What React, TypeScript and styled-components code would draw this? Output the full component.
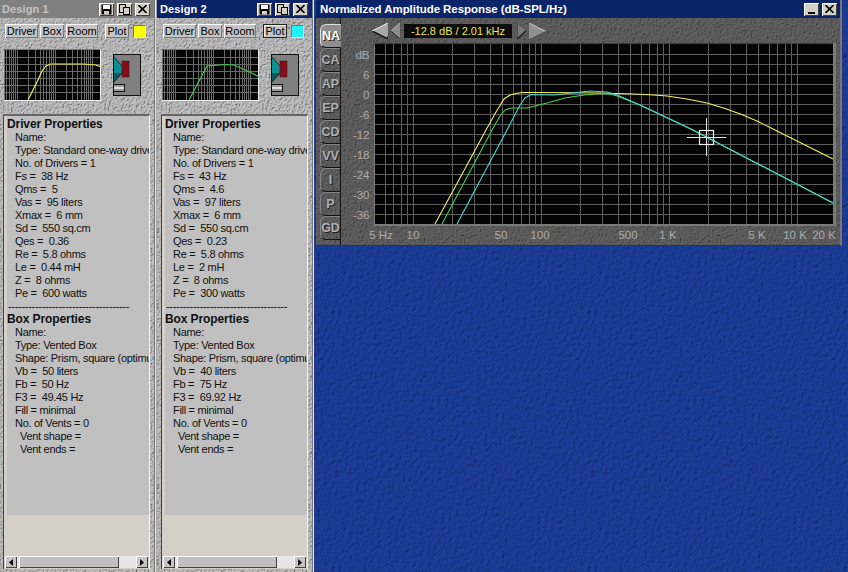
import React from "react";
import styled, { createGlobalStyle } from "styled-components";

const texture = (freq: number, color: string, scale: number, kd = 1.15) => {
  const svg = `<svg xmlns="http://www.w3.org/2000/svg" width="256" height="256"><filter id="n" x="0" y="0" width="100%" height="100%"><feTurbulence type="fractalNoise" baseFrequency="${freq}" numOctaves="3" seed="4" stitchTiles="stitch"/><feDiffuseLighting surfaceScale="${scale}" diffuseConstant="${kd}" lighting-color="${color}"><feDistantLight azimuth="225" elevation="60"/></feDiffuseLighting></filter><rect width="256" height="256" filter="url(#n)"/></svg>`;
  return `url("data:image/svg+xml,${encodeURIComponent(svg)}")`;
};

const GlobalStyle = createGlobalStyle`
  html, body {
    margin: 0;
    padding: 0;
    width: 848px;
    height: 572px;
    overflow: hidden;
    background: #1c3a8c;
  }
`;

const Desktop = styled.div`
  display: flex;
  align-items: flex-start;
  width: 849px;
  height: 572px;
  margin-left: -1px;
  overflow: hidden;
  background-color: #1c3a8c;
  background-image: ${texture(0.28, "#1b3a92", 1.5)};
  font-family: "Liberation Sans", Arial, sans-serif;
  font-size: 11px;
  color: #000;
`;

const DesignWindow = styled.div`
  flex: none;
  width: 155px;
  height: 572px;
  margin-right: 2px;
  border-right: 1px solid #777;
  box-shadow: 1px 0 0 #e4e4e4;
  background-color: #b8b8b8;
  background-image: ${texture(0.6, "#b8b8b8", 2.8)};

  &:first-child {
    box-shadow: 1px 0 0 #e4e4e4, 2px 0 0 #a8a8a8;
  }
`;

const TitleBar = styled.div<{ $active?: boolean }>`
  display: flex;
  align-items: center;
  height: 18px;
  padding: 0 4px 0 3px;
  background: ${(p) => (p.$active ? "#0a246a" : "#808080")};
  color: ${(p) => (p.$active ? "#fff" : "#c4c4c4")};
  font-weight: bold;
  font-size: 11px;
  letter-spacing: 0.1px;
  white-space: nowrap;
`;

const TitleText = styled.span`
  flex: 1;
`;

const CaptionButton = styled.button`
  display: flex;
  align-items: center;
  justify-content: center;
  width: 15px;
  height: 13px;
  padding: 0;
  margin-left: 3px;
  border: none;
  background: #d4d0c8;
  box-shadow: inset 1px 1px 0 #fff, inset -1px -1px 0 #404040;
`;

const Toolbar = styled.div`
  display: flex;
  align-items: center;
  gap: 2px;
  height: 14px;
  margin-top: 6px;
  padding-left: 6px;
`;

const PanelButton = styled.button<{ $width: number; $pressed?: boolean; $gapLeft?: number }>`
  width: ${(p) => p.$width}px;
  height: 14px;
  margin-left: ${(p) => p.$gapLeft ?? 0}px;
  padding: 0;
  border: none;
  background: #c4c4c4;
  box-shadow: ${(p) =>
    p.$pressed
      ? "inset 1px 1px 0 #222, inset -1px -1px 0 #222, inset 2px 2px 0 #eee"
      : "inset 1px 1px 0 #fff, inset -1px -1px 0 #777"};
  font: 11px "Liberation Sans", Arial, sans-serif;
  color: #000;
`;

const Swatch = styled.div<{ $color: string }>`
  width: 11px;
  height: 11px;
  margin-left: 2px;
  background: ${(p) => p.$color};
  border: 1px solid #eee;
  border-top-color: #777;
  border-left-color: #777;
`;

const PreviewRow = styled.div`
  display: flex;
  align-items: flex-start;
  margin-top: 11px;
  padding-left: 5px;
`;

const SpeakerSlot = styled.div`
  margin: 5px 0 0 12px;
`;

const PropertiesPanel = styled.div`
  display: flex;
  flex-direction: column;
  width: 145px;
  height: 453px;
  margin: 13px 0 0 4px;
  background: #d4d0c8;
  border-top: 2px solid #666;
  border-left: 1px solid #444;
  border-right: 1px solid #f4f4f4;
`;

const TextPane = styled.div`
  flex: none;
  height: 397px;
  margin-left: 3px;
  padding-top: 2px;
  overflow: hidden;
  background: #c0c0c0;
  color: #111;
  line-height: 13px;
  font-size: 11px;
  letter-spacing: -0.3px;
  white-space: nowrap;
`;

const Heading = styled.div`
  height: 13px;
  font-weight: bold;
  font-size: 12px;
  letter-spacing: -0.1px;
`;

const PropRow = styled.div<{ $indent: number }>`
  height: 13px;
  padding-left: ${(p) => p.$indent}px;
`;

const ScrollBar = styled.div`
  display: flex;
  align-items: stretch;
  height: 12px;
  margin: auto 1px 1px 1px;
  background: #e6e6e6;
`;

const ScrollArrow = styled.div`
  display: flex;
  flex: none;
  align-items: center;
  justify-content: center;
  width: 12px;
  background: #c4c4c4;
  box-shadow: inset 1px 1px 0 #fff, inset -1px -1px 0 #404040;
`;

const ScrollThumb = styled.div`
  flex: none;
  width: 100px;
  margin-left: 2px;
  background: #c0c0c0;
  box-shadow: inset 1px 1px 0 #fff, inset -1px -1px 0 #404040;
`;

const ScrollTrack = styled.div`
  flex: 1;
`;

const GraphWindow = styled.div`
  flex: none;
  width: 526px;
  height: 246px;
  margin-left: 1px;
  background-color: #5c5c5c;
  background-image: ${texture(0.55, "#5c5c5c", 2)};
  border-right: 2px solid #777;
  border-bottom: 1px solid #333;
  box-sizing: border-box;
`;

const GraphTitle = styled(TitleBar)`
  padding: 0 3px 0 4px;
  font-size: 11.5px;
  letter-spacing: -0.05px;
`;

const GraphBody = styled.div`
  display: flex;
  height: 227px;
`;

const TabStrip = styled.div`
  display: flex;
  flex: none;
  flex-direction: column;
  width: 25px;
  padding: 6px 0 0 4px;
  box-sizing: border-box;
  border-right: 1px solid #111;
`;

const Tab = styled.div<{ $active?: boolean }>`
  display: flex;
  align-items: center;
  justify-content: center;
  flex: none;
  box-sizing: border-box;
  width: ${(p) => (p.$active ? "21px" : "20px")};
  height: 24px;
  border: 1px solid ${(p) => (p.$active ? "#ddd" : "#858585")};
  border-right: none;
  border-bottom: 1px solid #111;
  border-radius: 6px 0 0 6px;
  background: ${(p) => (p.$active ? "#8e8e8e" : "transparent")};
  color: ${(p) => (p.$active ? "#fff" : "#b0b0b0")};
  font-size: 12.5px;
  font-weight: bold;
  text-shadow: 1px 1px 0 #222;
`;

const ChartArea = styled.div`
  display: flex;
  flex: 1;
  flex-direction: column;
  min-width: 0;
`;

const NavBar = styled.div`
  display: flex;
  align-items: center;
  gap: 3px;
  box-sizing: border-box;
  height: 24px;
  padding: 2px 0 0 31px;
`;

const Readout = styled.div`
  display: flex;
  align-items: center;
  justify-content: center;
  width: 108px;
  height: 14px;
  margin: 0 2px 0 1px;
  background: #0c0c0c;
  color: #e8e850;
  font-size: 11px;
  white-space: nowrap;
`;

const ChartSvg = styled.svg`
  display: block;
  width: 500px;
  height: 203px;
`;

const AxisLabel = styled.text`
  fill: #ababab;
  font-family: "Liberation Sans", Arial, sans-serif;
  font-size: 11.5px;
`;

const CloseGlyph = () => (
  <svg width="9" height="8" viewBox="0 0 9 8">
    <path d="M0.5 0 L8.5 8 M8.5 0 L0.5 8" stroke="#000" strokeWidth="1.6" />
  </svg>
);

const SaveGlyph = () => (
  <svg width="11" height="11" viewBox="0 0 11 11">
    <path d="M0.5 0.5 H10.5 V10.5 H0.5 Z" fill="#000" />
    <rect x="2" y="1" width="7" height="4" fill="#fff" />
    <rect x="3" y="7" width="5" height="3.5" fill="#d4d0c8" />
  </svg>
);

const CopyGlyph = () => (
  <svg width="11" height="11" viewBox="0 0 11 11">
    <rect x="0.5" y="0.5" width="6" height="8" fill="none" stroke="#000" />
    <rect x="4.5" y="3.5" width="6" height="7" fill="#d4d0c8" stroke="#000" />
  </svg>
);

const MinGlyph = () => (
  <svg width="9" height="9" viewBox="0 0 9 9">
    <rect x="1" y="7" width="7" height="2" fill="#000" />
  </svg>
);

const Triangle = ({ dir }: { dir: "left" | "right" }) => (
  <svg width="4" height="7" viewBox="0 0 4 7">
    <path d={dir === "left" ? "M4 0 L0 3.5 L4 7 Z" : "M0 0 L4 3.5 L0 7 Z"} fill="#000" />
  </svg>
);

const BigLeftArrow = () => (
  <svg width="16" height="16" viewBox="0 0 16 16">
    <path d="M16 0 L0 8 L16 16 Z" fill="#a8a8a8" />
    <path d="M0 8 L16 16 V13" stroke="#111" strokeWidth="1.5" fill="none" />
    <path d="M0 8 L16 0" stroke="#eee" strokeWidth="1" fill="none" />
  </svg>
);

const SmallLeftArrow = () => (
  <svg width="9" height="16" viewBox="0 0 9 16">
    <path d="M9 0 L0 8 L9 16 Z" fill="#8c8c8c" />
    <path d="M0 8 L9 16" stroke="#222" strokeWidth="1" />
    <path d="M0 8 L9 0" stroke="#bbb" strokeWidth="1" />
  </svg>
);

const SmallRightArrow = () => (
  <svg width="9" height="16" viewBox="0 0 9 16">
    <path d="M0 0 L9 8 L0 16 Z" fill="#777" />
    <path d="M0 16 L9 8" stroke="#111" strokeWidth="1.2" />
    <path d="M0 0 V16" stroke="#222" strokeWidth="1" />
  </svg>
);

const BigRightArrow = () => (
  <svg width="17" height="17" viewBox="0 0 17 17">
    <path d="M0 0 L17 8.5 L0 17 Z" fill="#909090" />
    <path d="M0 0 L17 8.5" stroke="#ccc" strokeWidth="1" />
    <path d="M0 17 L17 8.5" stroke="#444" strokeWidth="1" />
  </svg>
);

const Speaker = () => (
  <svg width="28" height="42" viewBox="0 0 28 42">
    <rect x="0.5" y="0.5" width="27" height="41" fill="#808080" stroke="#111" />
    <path d="M1 3 L9 12 V20 L1 28 Z" fill="#0e8f96" />
    <path d="M1 19 L9 19 L1 28 Z" fill="#0b5a60" />
    <path d="M1 3 L9 12 M1 28 L9 19" stroke="#111" strokeWidth="0.8" />
    <rect x="9" y="7" width="7" height="16" fill="#8a0c14" stroke="#222" strokeWidth="0.6" />
    <rect x="0.5" y="30.5" width="11" height="7" fill="#999" stroke="#111" />
    <rect x="1" y="33" width="10" height="2" fill="#ddd" />
  </svg>
);

const thumbGridX = (() => {
  const xs: number[] = [];
  [12, 49.5, 87].forEach((end) => {
    for (let n = 2; n <= 10; n++) xs.push(Math.round(end + 37.5 * (Math.log10(n) - 1)));
  });
  return xs;
})();

const Thumbnail = ({ points, color }: { points: string; color: string }) => (
  <svg width="97" height="52" viewBox="0 0 97 52" style={{ display: "block" }}>
    <rect width="97" height="52" fill="#eee" />
    <rect width="96" height="51" fill="#777" />
    <rect x="1" y="1" width="95" height="50" fill="#050505" />
    {thumbGridX.map((x, i) => (
      <line key={i} x1={x + 1.5} x2={x + 1.5} y1="1" y2="51" stroke="#6a6a6a" />
    ))}
    {[8, 15, 22, 29, 36, 43].map((y) => (
      <line key={y} x1="1" x2="96" y1={y + 0.5} y2={y + 0.5} stroke="#6a6a6a" />
    ))}
    <polyline points={points} fill="none" stroke={color} strokeWidth="1.2" />
  </svg>
);

const DECADE = 128;
const freqX = (f: number) => Math.round(413 + DECADE * Math.log10(f / 10)) + 0.5;

const gridFreqs = [
  6, 7, 8, 9, 10, 20, 30, 40, 50, 60, 70, 80, 90, 100, 200, 300, 400, 500, 600, 700, 800, 900,
  1000, 2000, 3000, 4000, 5000, 6000, 7000, 8000, 9000, 10000, 20000,
].filter((f) => freqX(f) < 833);

const dbLabels: [string, number][] = [
  ["dB", 55], ["6", 75], ["0", 95], ["-6", 115], ["-12", 135],
  ["-18", 155], ["-24", 175], ["-30", 195], ["-36", 215],
];

const freqLabels: [string, number][] = [
  ["5 Hz", 381], ["10", 413], ["50", 501], ["100", 540], ["500", 628],
  ["1 K", 668], ["5 K", 757], ["10 K", 795], ["20 K", 824],
];

const yellowCurve =
  "435,224 486,130 496,112 504,99 510,95 516,93.5 522,92.5 540,92.5 600,93 633,94 650,94.8 667,96 687,99 707,103 725,108.5 743,115 758,121.5 775,130 833,159";
const greenCurve =
  "442,224 492,130 500,116 505,110 511,108 527,108 547,103 565,98 584,95 600,93.5 610,94 617,96 640,105 693,130 833,203";
const cyanCurve =
  "457,224 507,130 520,105 525,98 531,94.5 554,95 572,93 590,91 607,92 617,95 640,105 693,130 833,203";

const ResponseChart = () => (
  <ChartSvg viewBox="341 42 500 203">
    <rect x="374" y="43" width="462" height="183" fill="#7a7a7a" />
    <rect x="374" y="43" width="459" height="1" fill="#3c3c3c" />
    <rect x="375" y="44" width="458" height="180" fill="#040404" />
    {gridFreqs.map((f) => (
      <line key={f} x1={freqX(f)} x2={freqX(f)} y1="44" y2="224" stroke="#5e5e5e" />
    ))}
    {Array.from({ length: 17 }, (_, i) => 54 + i * 10).map((y) => (
      <line key={y} x1="375" x2="833" y1={y + 0.5} y2={y + 0.5} stroke="#5e5e5e" />
    ))}
    <polyline points={yellowCurve} fill="none" stroke="#f2f25a" strokeWidth="1.1" />
    <polyline points={greenCurve} fill="none" stroke="#3fd04a" strokeWidth="1.1" />
    <polyline points={cyanCurve} fill="none" stroke="#46d8d8" strokeWidth="1.1" />
    <path d="M687 137.5 H726 M706.5 118 V156" stroke="#e8e8e8" strokeWidth="1" />
    <rect x="699.5" y="130.5" width="14" height="14" fill="none" stroke="#f2f2f2" strokeWidth="1.2" />
    {dbLabels.map(([t, y]) => (
      <AxisLabel key={t} x="369.5" y={y + 4} textAnchor="end">{t}</AxisLabel>
    ))}
    {freqLabels.map(([t, x]) => (
      <AxisLabel key={t} x={x} y="239" textAnchor="middle">{t}</AxisLabel>
    ))}
  </ChartSvg>
);

type Design = {
  title: string;
  active?: boolean;
  swatch: string;
  curve: string;
  curveColor: string;
  driver: string[];
  box: string[];
};

const designs: Design[] = [
  {
    title: "Design 1",
    swatch: "#ffff00",
    curve: "24,51 33,33 38,22 42,17 47,15 78,15 92,16 97,18",
    curveColor: "#eded50",
    driver: [
      "Name:", "Type: Standard one-way driver", "No. of Drivers = 1", "Fs =  38 Hz", "Qms =  5",
      "Vas =  95 liters", "Xmax =  6 mm", "Sd =  550 sq.cm", "Qes =  0.36", "Re =  5.8 ohms",
      "Le =  0.44 mH", "Z =  8 ohms", "Pe =  600 watts",
    ],
    box: [
      "Name:", "Type: Vented Box", "Shape: Prism, square (optimum)", "Vb =  50 liters", "Fb =  50 Hz",
      "F3 =  49.45 Hz", "Fill = minimal", "No. of Vents = 0",
    ],
  },
  {
    title: "Design 2",
    active: true,
    swatch: "#22f0f8",
    curve: "27,51 45,17 58,16 63,15.5 72,16 90,24 97,28",
    curveColor: "#3fc84a",
    driver: [
      "Name:", "Type: Standard one-way driver", "No. of Drivers = 1", "Fs =  43 Hz", "Qms =  4.6",
      "Vas =  97 liters", "Xmax =  6 mm", "Sd =  550 sq.cm", "Qes =  0.23", "Re =  5.8 ohms",
      "Le =  2 mH", "Z =  8 ohms", "Pe =  300 watts",
    ],
    box: [
      "Name:", "Type: Vented Box", "Shape: Prism, square (optimum)", "Vb =  40 liters", "Fb =  75 Hz",
      "F3 =  69.92 Hz", "Fill = minimal", "No. of Vents = 0",
    ],
  },
];

const tabs = ["NA", "CA", "AP", "EP", "CD", "VV", "I", "P", "GD"];

const keep = (s: string) => s.replace(/ {2}/g, " \u00a0");

const DesignPanel = ({ design }: { design: Design }) => (
  <DesignWindow>
    <TitleBar $active={design.active}>
      <TitleText>{design.title}</TitleText>
      <CaptionButton><SaveGlyph /></CaptionButton>
      <CaptionButton><CopyGlyph /></CaptionButton>
      <CaptionButton><CloseGlyph /></CaptionButton>
    </TitleBar>
    <Toolbar>
      <PanelButton $width={33}>Driver</PanelButton>
      <PanelButton $width={24}>Box</PanelButton>
      <PanelButton $width={32}>Room</PanelButton>
      <PanelButton $width={24} $gapLeft={5} $pressed={design.active}>Plot</PanelButton>
      <Swatch $color={design.swatch} />
    </Toolbar>
    <PreviewRow>
      <Thumbnail points={design.curve} color={design.curveColor} />
      <SpeakerSlot><Speaker /></SpeakerSlot>
    </PreviewRow>
    <PropertiesPanel>
      <TextPane>
        <Heading>Driver Properties</Heading>
        {design.driver.map((row) => (
          <PropRow key={row} $indent={8}>{keep(row)}</PropRow>
        ))}
        <PropRow $indent={1}>------------------------------------</PropRow>
        <Heading>Box Properties</Heading>
        {design.box.map((row) => (
          <PropRow key={row} $indent={8}>{keep(row)}</PropRow>
        ))}
        <PropRow $indent={13}>Vent shape =</PropRow>
        <PropRow $indent={13}>Vent ends =</PropRow>
      </TextPane>
      <ScrollBar>
        <ScrollArrow><Triangle dir="left" /></ScrollArrow>
        <ScrollThumb />
        <ScrollTrack />
        <ScrollArrow><Triangle dir="right" /></ScrollArrow>
      </ScrollBar>
    </PropertiesPanel>
  </DesignWindow>
);

export default function App() {
  return (
    <Desktop>
      <GlobalStyle />
      {designs.map((d) => (
        <DesignPanel key={d.title} design={d} />
      ))}
      <GraphWindow>
        <GraphTitle $active>
          <TitleText>Normalized Amplitude Response (dB-SPL/Hz)</TitleText>
          <CaptionButton><MinGlyph /></CaptionButton>
          <CaptionButton><CloseGlyph /></CaptionButton>
        </GraphTitle>
        <GraphBody>
          <TabStrip>
            {tabs.map((t, i) => (
              <Tab key={t} $active={i === 0}>{t}</Tab>
            ))}
          </TabStrip>
          <ChartArea>
            <NavBar>
              <BigLeftArrow />
              <SmallLeftArrow />
              <Readout>-12.8 dB / 2.01 kHz</Readout>
              <SmallRightArrow />
              <BigRightArrow />
            </NavBar>
            <ResponseChart />
          </ChartArea>
        </GraphBody>
      </GraphWindow>
    </Desktop>
  );
}
